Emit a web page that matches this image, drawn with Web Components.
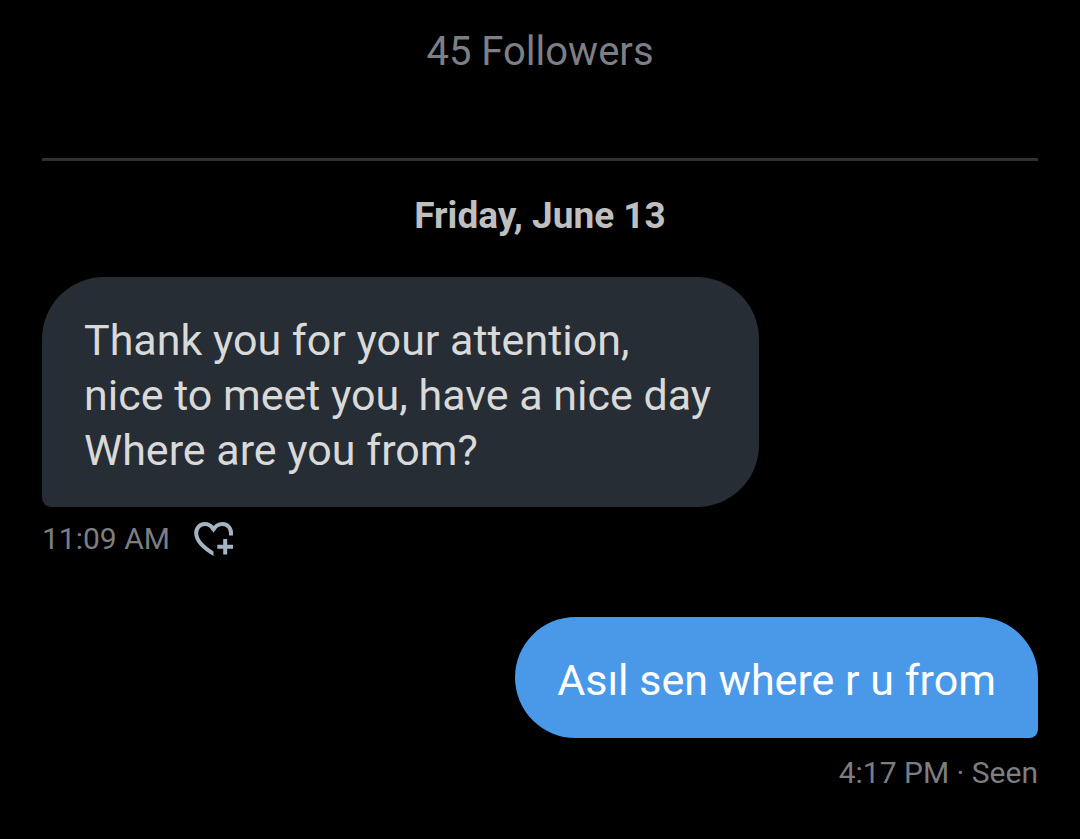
<!DOCTYPE html>
<html lang="en">
<head>
<meta charset="utf-8">
<meta name="viewport" content="width=device-width, initial-scale=1">
<title>Conversation</title>
<style>
  body { margin: 0; background: #000; font-family: Roboto, "Liberation Sans", sans-serif; }
</style>
</head>
<body>
<dm-thread>
  <dm-profile-summary>45 Followers</dm-profile-summary>
  <dm-day>Friday, June 13</dm-day>
  <dm-message side="received">Thank you for your attention,<br>nice to meet you, have a nice day<br>Where are you from?<span slot="meta">11:09 AM</span><dm-react-button slot="meta"></dm-react-button></dm-message>
  <dm-message side="sent">Asıl sen where r u from<span slot="meta">4:17 PM · Seen</span></dm-message>
</dm-thread>
<script>
  const define = (name, html) => {
    const template = document.createElement('template');
    template.innerHTML = html;
    customElements.define(name, class extends HTMLElement {
      constructor() {
        super();
        this.attachShadow({ mode: 'open' }).append(template.content.cloneNode(true));
      }
    });
  };

  define('dm-thread', `
    <style>
      :host { display: block; }
      main { display: flex; flex-direction: column; padding: 28px 42px; }
    </style>
    <main><slot></slot></main>`);

  define('dm-profile-summary', `
    <style>
      :host { display: block; padding-bottom: 82px; border-bottom: 3px solid #2f3133; text-align: center; }
      p { margin: 0; font-size: 40px; line-height: 48px; color: #7c7f85; }
    </style>
    <p><slot></slot></p>`);

  define('dm-day', `
    <style>
      :host { display: block; padding: 31px 0 37px; text-align: center; }
      h2 { margin: 0; font-size: 37px; line-height: 48px; font-weight: 700; color: #bfbfbf; }
    </style>
    <h2><slot></slot></h2>`);

  define('dm-message', `
    <style>
      :host { display: flex; flex-direction: column; align-items: flex-start; margin-bottom: 46px; }
      :host([side="sent"]) { align-items: flex-end; margin: 0; }
      .bubble {
        box-sizing: border-box; min-width: 72%;
        margin: 0; padding: 36px 42px 29px; border-radius: 62px 62px 62px 9px;
        background: #262d34; color: #d9d9d9; font-size: 43px; line-height: 55px;
      }
      :host([side="sent"]) .bubble {
        min-width: 0; padding-bottom: 30px; border-radius: 62px 62px 9px 62px;
        background: #4a99e9; color: #fff;
      }
      .meta { display: flex; align-items: center; gap: 24px; height: 64px; font-size: 30px; line-height: 40px; color: #7c7e82; }
      :host([side="sent"]) .meta { height: 70px; }
    </style>
    <p class="bubble"><slot></slot></p>
    <div class="meta"><slot name="meta"></slot></div>`);

  define('dm-react-button', `
    <style>
      :host { display: block; }
      button { display: block; padding: 0; border: 0; background: none; color: #a5b4c0; cursor: pointer; }
      svg { display: block; width: 40px; height: 36px; }
    </style>
    <button type="button" aria-label="Add reaction">
      <svg viewBox="0 0 40 36" fill="none" stroke="currentColor" stroke-width="4" aria-hidden="true">
        <clipPath id="left"><path d="M0 0H19.5V36H0Z"/></clipPath>
        <path clip-path="url(#left)" d="M19.5 8.5C17.5 5 14.5 3 10.8 3C5.8 3 2.2 6.8 2.2 12C2.2 19.5 8.5 26.5 22 34.2"/>
        <path d="M19.5 8.5C21.5 5 24.5 3 28.4 3C33.5 3 37 6.8 37 12V14.5" />
        <path d="M19.5 4.6L22 8L19.5 11.8L17 8Z" fill="currentColor" stroke="none"/>
        <path d="M31.2 18V33.5M23.3 25.8H39"/>
      </svg>
    </button>`);
</script>
</body>
</html>
